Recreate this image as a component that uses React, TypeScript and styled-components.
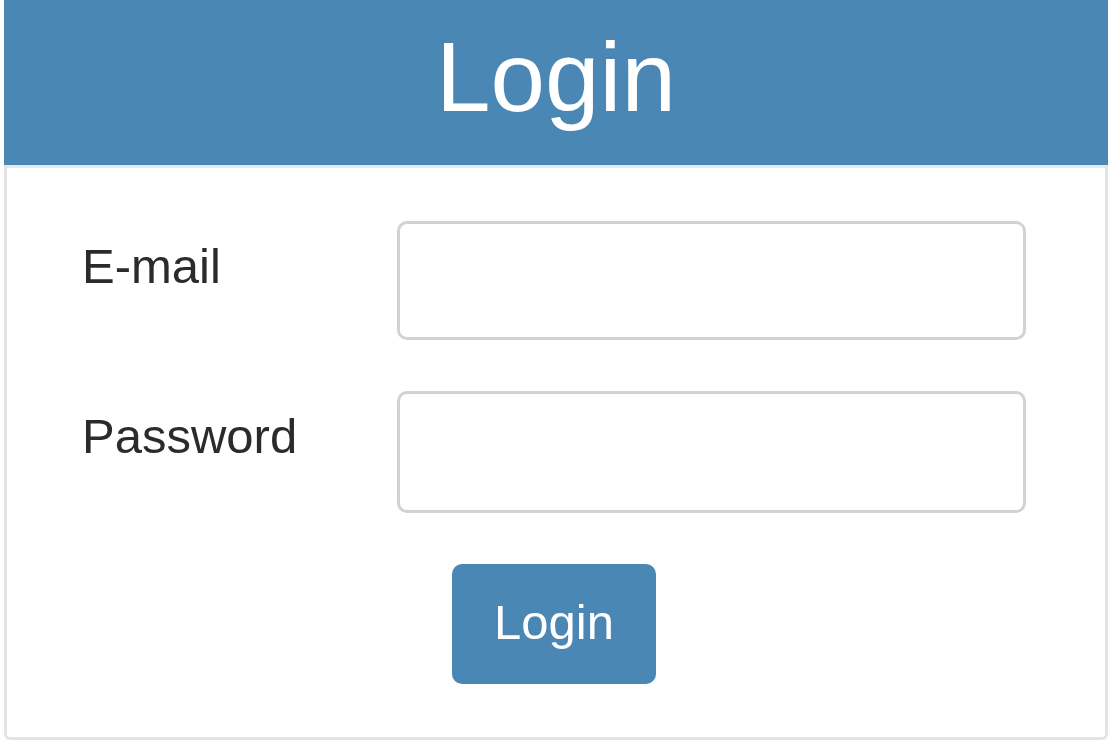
import styled, { createGlobalStyle } from "styled-components";

const GlobalStyle = createGlobalStyle`
  html, body {
    margin: 0;
    padding: 0;
    background: #fff;
    font-family: "Liberation Sans", Arial, sans-serif;
  }
`;

const Page = styled.div`
  padding-left: 4px;
  width: 1104px;
`;

const Header = styled.div`
  box-sizing: border-box;
  height: 165px;
  padding-top: 28px;
  background-color: #4b87b4;
  color: #fff;
  text-align: center;
  font-size: 98px;
  line-height: 98px;
`;

const Panel = styled.form`
  box-sizing: border-box;
  height: 575px;
  border: 3px solid #e3e3e3;
  border-top-color: #e6eaee;
  border-radius: 0 0 6px 6px;
  padding: 53px 0 0 75px;
  display: flex;
  flex-direction: column;
  gap: 51px;
`;

const Row = styled.div`
  display: grid;
  grid-template-columns: 315px 629px;
  align-items: start;
`;

const Label = styled.label`
  padding-top: 16px;
  font-size: 49px;
  line-height: 59px;
  color: #2b2b2b;
`;

const Input = styled.input<{ $h: number }>`
  box-sizing: border-box;
  width: 629px;
  height: ${(p) => p.$h}px;
  border: 3px solid #d2d2d2;
  border-radius: 10px;
  background: #fff;
  outline: none;
  font-size: 40px;
  padding: 0 20px;
`;

const Actions = styled.div`
  padding-left: 370px;
`;

const Button = styled.button`
  box-sizing: border-box;
  width: 204px;
  height: 120px;
  border: none;
  border-radius: 10px;
  background-color: #4b87b4;
  color: #fff;
  font-family: "Liberation Sans", Arial, sans-serif;
  font-size: 49px;
  display: flex;
  align-items: center;
  justify-content: center;
  padding: 0 0 4px;
`;

export default function App() {
  return (
    <>
      <GlobalStyle />
      <Page>
        <Header>Login</Header>
        <Panel onSubmit={(e) => e.preventDefault()}>
          <Row>
            <Label htmlFor="email">E-mail</Label>
            <Input id="email" type="email" $h={119} />
          </Row>
          <Row>
            <Label htmlFor="password">Password</Label>
            <Input id="password" type="password" $h={122} />
          </Row>
          <Actions>
            <Button type="submit">Login</Button>
          </Actions>
        </Panel>
      </Page>
    </>
  );
}
